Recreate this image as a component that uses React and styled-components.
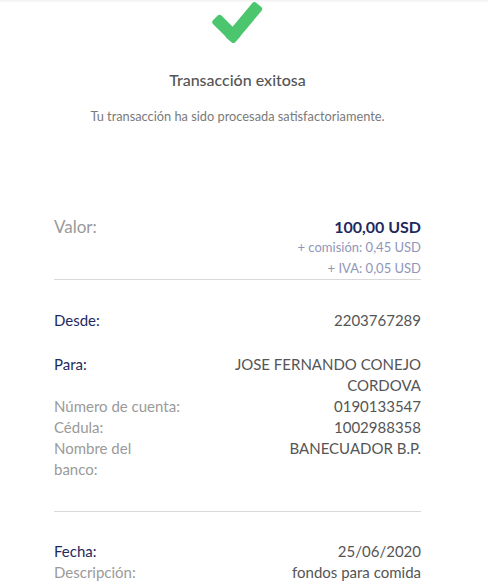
import React from "react";
import styled, { createGlobalStyle } from "styled-components";

const GlobalStyle = createGlobalStyle`
  body {
    margin: 0;
    background: #ffffff;
    font-family: Lato, "Noto Sans", sans-serif;
  }
`;

const Page = styled.div`
  width: 488px;
  height: 584px;
  overflow: hidden;
  box-shadow: inset 0 3px 3px -2px rgba(0, 0, 0, 0.08);
`;

const Content = styled.div`
  padding: 0 67px 0 54px;
`;

const Header = styled.div`
  display: flex;
  flex-direction: column;
  align-items: center;
`;

const Title = styled.h1`
  margin: 26px 0 0;
  font-size: 16px;
  line-height: 20px;
  font-weight: 500;
  color: #555555;
`;

const Subtitle = styled.p`
  margin: 18px 0 0;
  font-size: 12.8px;
  line-height: 16px;
  color: #7a7a7a;
`;

const Summary = styled.div`
  margin-top: 92px;
  display: flex;
  justify-content: space-between;
  border-bottom: 1px solid #d9d9d9;
`;

const Amounts = styled.div`
  display: flex;
  flex-direction: column;
  align-items: flex-end;
`;

const Total = styled.span`
  font-size: 16px;
  line-height: 21px;
  font-weight: 700;
  color: #1e2a5e;
`;

const Fee = styled.span`
  font-size: 13px;
  line-height: 21px;
  color: #8f96b8;
`;

const Section = styled.div`
  margin-top: ${(p) => p.$top}px;
  border-bottom: ${(p) => (p.$divider ? "1px solid #d9d9d9" : "none")};
  padding-bottom: ${(p) => (p.$divider ? 31 : 0)}px;
`;

const Row = styled.div`
  display: flex;
  justify-content: space-between;
  align-items: flex-start;
  gap: 12px;
  margin-top: ${(p) => p.$top || 0}px;
`;

const Label = styled.span`
  font-size: ${(p) => (p.$big ? 17 : 15)}px;
  line-height: 21px;
  color: ${(p) => (p.$strong ? "#1e2a5e" : "#9a9a9a")};
  max-width: ${(p) => p.$max || "none"};
  flex-shrink: 0;
`;

const Value = styled.span`
  font-size: 15px;
  line-height: 21px;
  color: #555555;
  text-align: right;
  max-width: ${(p) => p.$max || "none"};
`;

const Check = () => (
  <svg width="56" height="44" viewBox="0 0 56 44">
    <g fill="#4bc56e">
      <rect x="-6" y="-6" width="31" height="12" rx="3" transform="translate(23 35.5) rotate(-135)" />
      <rect x="-6" y="-6" width="46" height="12" rx="3" transform="translate(23 35.5) rotate(-50)" />
    </g>
  </svg>
);

const App = () => (
  <Page>
    <GlobalStyle />
    <Content>
      <Header>
        <Check />
        <Title>Transacción exitosa</Title>
        <Subtitle>Tu transacción ha sido procesada satisfactoriamente.</Subtitle>
      </Header>

      <Summary>
        <Label $big>Valor:</Label>
        <Amounts>
          <Total>100,00 USD</Total>
          <Fee>+ comisión: 0,45 USD</Fee>
          <Fee>+ IVA: 0,05 USD</Fee>
        </Amounts>
      </Summary>

      <Section $top={30} $divider>
        <Row>
          <Label $strong>Desde:</Label>
          <Value>2203767289</Value>
        </Row>
        <Row $top={23}>
          <Label $strong>Para:</Label>
          <Value $max="190px">JOSE FERNANDO CONEJO CORDOVA</Value>
        </Row>
        <Row>
          <Label>Número de cuenta:</Label>
          <Value>0190133547</Value>
        </Row>
        <Row>
          <Label>Cédula:</Label>
          <Value>1002988358</Value>
        </Row>
        <Row>
          <Label $max="90px">Nombre del banco:</Label>
          <Value>BANECUADOR B.P.</Value>
        </Row>
      </Section>

      <Section $top={29}>
        <Row>
          <Label $strong>Fecha:</Label>
          <Value>25/06/2020</Value>
        </Row>
        <Row>
          <Label>Descripción:</Label>
          <Value>fondos para comida</Value>
        </Row>
      </Section>
    </Content>
  </Page>
);

export default App;
